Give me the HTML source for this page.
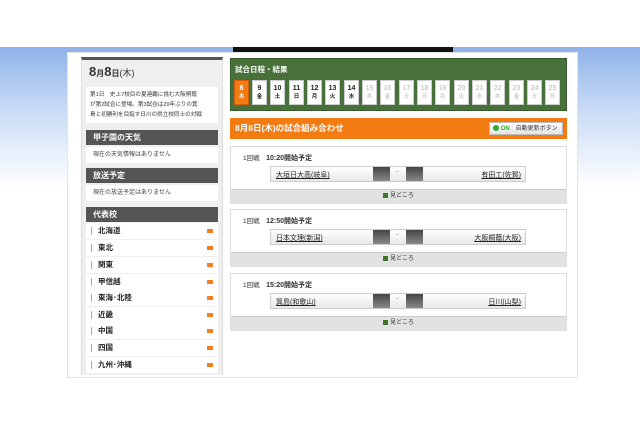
<!DOCTYPE html>
<html><head><meta charset="utf-8"><style>
*{margin:0;padding:0;box-sizing:border-box}
body{width:640px;height:426px;overflow:hidden;background:#fff;position:relative;font-family:"Liberation Sans","Noto Sans CJK JP",sans-serif;color:#222}
.abs{position:absolute}
.bg{left:0;top:47px;width:640px;height:140px;background:linear-gradient(#8fb3ea,#c9dbf5 45%,#fff)}
.main{left:67px;top:52px;width:511px;height:326px;background:#fff;border:1px solid #e4e4e4}
.side{left:81px;top:57px;width:142px;height:318px;background:#efefef;border-top:3px solid #555;border-left:1px solid #ddd;border-right:1px solid #ddd}
.hd{background:#555;color:#fff;font-size:8px;font-weight:bold;padding-left:7px;height:15px;line-height:15px;width:132px;left:86px}
.wr{background:#fff;font-size:6px;color:#444;width:132px;left:86px;height:16px;line-height:16px;padding-left:7px}
.li{left:86px;width:132px;height:16px;background:#fff;font-size:7.5px;font-weight:bold;line-height:16px;padding-left:12px;color:#222}
.li:before{content:"";position:absolute;left:5px;top:4px;width:1px;height:8px;background:#aaa}
.li:after{content:"";position:absolute;right:5px;top:6px;width:6px;height:4px;background:#f08020}
.green{left:230px;top:58px;width:337px;height:53px;background:#47703a;border:1px solid #355a2c}
.db{top:80px;width:15px;height:25px;background:#fff;border:1px solid #ccc;font-size:7px;font-weight:bold;text-align:center;line-height:9px;padding-top:3px}
.db span{font-size:5.5px;display:block}
.db.off{color:#ccc}
.org{left:230px;top:118px;width:337px;height:21px;background:#f47a12;color:#fff;font-size:8.5px;font-weight:bold;line-height:21px;padding-left:5px}
.card{left:230px;width:337px;height:58px;border:1px solid #ddd;background:#fff}
.card .t{position:absolute;left:12px;top:5px;font-size:6.5px;color:#333}
.card .t b{font-size:7px}
.bar{position:absolute;left:39px;top:19px;width:256px;height:16px;background:linear-gradient(#fff,#e8e8e8);border:1px solid #ccc}
.bar .n{position:absolute;top:3px;font-size:7px;text-decoration:underline;color:#222}
.sq{position:absolute;top:0;width:17px;height:14px;background:linear-gradient(#444,#888)}
.ft{position:absolute;left:0;bottom:0;width:335px;height:14px;background:#e2e2e2;border-top:1px solid #ccc;font-size:6px;text-align:center;line-height:13px;color:#333}
.ft:before{content:"";display:inline-block;width:5px;height:5px;background:#3a7a2a;margin-right:2px;vertical-align:-1px}
</style></head><body>
<div class="abs bg"></div>
<div class="abs" style="left:233px;top:47px;width:220px;height:5px;background:#111"></div>
<div class="abs main"></div>
<div class="abs side"></div>
<div class="abs" style="left:89px;top:64px;font-size:13px;font-weight:bold;color:#333">8<span style="font-size:8px">月</span>8<span style="font-size:8px">日</span><span style="font-size:9px;font-weight:normal">(木)</span></div>
<div class="abs" style="left:86px;top:87px;width:132px;height:36px;background:#fff;font-size:5.6px;line-height:10px;padding:3px 4px;color:#333;overflow:hidden;white-space:nowrap">第1日　史上7校目の夏連覇に挑む大阪桐蔭<br>が第2試合に登場。第3試合は29年ぶりの箕<br>島と初勝利を目指す日川の県立校同士の対戦</div>
<div class="abs hd" style="top:130px">甲子園の天気</div>
<div class="abs wr" style="top:147px">現在の天気情報はありません</div>
<div class="abs hd" style="top:168px">放送予定</div>
<div class="abs wr" style="top:185px">現在の放送予定はありません</div>
<div class="abs hd" style="top:207px">代表校</div>
<div class="abs li" style="top:223px">北海道</div>
<div class="abs li" style="top:240px">東北</div>
<div class="abs li" style="top:257px">関東</div>
<div class="abs li" style="top:274px">甲信越</div>
<div class="abs li" style="top:290px">東海･北陸</div>
<div class="abs li" style="top:307px">近畿</div>
<div class="abs li" style="top:323px">中国</div>
<div class="abs li" style="top:340px">四国</div>
<div class="abs li" style="top:357px">九州･沖縄</div>

<div class="abs green"></div>
<div class="abs" style="left:235px;top:64px;font-size:7.5px;font-weight:bold;color:#fff">試合日程・結果</div>
<div class="abs db" style="left:234px;background:#f47a12;color:#fff;border-color:#d06010">8<span>木</span></div>
<div class="abs db" style="left:252px">9<span>金</span></div>
<div class="abs db" style="left:270px">10<span>土</span></div>
<div class="abs db" style="left:289px">11<span>日</span></div>
<div class="abs db" style="left:307px">12<span>月</span></div>
<div class="abs db" style="left:325px">13<span>火</span></div>
<div class="abs db" style="left:344px">14<span>水</span></div>
<div class="abs db off" style="left:362px">15<span>木</span></div>
<div class="abs db off" style="left:380px">16<span>金</span></div>
<div class="abs db off" style="left:399px">17<span>土</span></div>
<div class="abs db off" style="left:417px">18<span>日</span></div>
<div class="abs db off" style="left:435px">19<span>月</span></div>
<div class="abs db off" style="left:454px">20<span>火</span></div>
<div class="abs db off" style="left:472px">21<span>水</span></div>
<div class="abs db off" style="left:490px">22<span>木</span></div>
<div class="abs db off" style="left:509px">23<span>金</span></div>
<div class="abs db off" style="left:527px">24<span>土</span></div>
<div class="abs db off" style="left:545px">25<span>日</span></div>

<div class="abs org">8月8日(木)の試合組み合わせ</div>
<div class="abs" style="left:489px;top:122px;width:74px;height:13px;background:linear-gradient(#fff,#e4e4e4);border:1px solid #bbb;font-size:6px;line-height:12px;padding-left:3px;color:#333;white-space:nowrap"><span style="display:inline-block;width:6px;height:6px;border-radius:50%;background:#3a3;vertical-align:-1px"></span><b style="color:#3a3"> ON</b>　自動更新ボタン</div>

<div class="abs card" style="top:146px"><div class="t">1回戦　<b>10:20開始予定</b></div>
<div class="bar"><span class="n" style="left:5px">大垣日大高(岐阜)</span><div class="sq" style="left:102px"></div><span style="position:absolute;left:124px;top:2px;font-size:7px;color:#aaa">−</span><div class="sq" style="left:135px"></div><span class="n" style="right:4px">有田工(佐賀)</span></div>
<div class="ft">見どころ</div></div>

<div class="abs card" style="top:209px"><div class="t">1回戦　<b>12:50開始予定</b></div>
<div class="bar"><span class="n" style="left:5px">日本文理(新潟)</span><div class="sq" style="left:102px"></div><span style="position:absolute;left:124px;top:2px;font-size:7px;color:#aaa">−</span><div class="sq" style="left:135px"></div><span class="n" style="right:4px">大阪桐蔭(大阪)</span></div>
<div class="ft">見どころ</div></div>

<div class="abs card" style="top:273px"><div class="t">1回戦　<b>15:20開始予定</b></div>
<div class="bar"><span class="n" style="left:5px">箕島(和歌山)</span><div class="sq" style="left:102px"></div><span style="position:absolute;left:124px;top:2px;font-size:7px;color:#aaa">−</span><div class="sq" style="left:135px"></div><span class="n" style="right:4px">日川(山梨)</span></div>
<div class="ft">見どころ</div></div>
</body></html>
